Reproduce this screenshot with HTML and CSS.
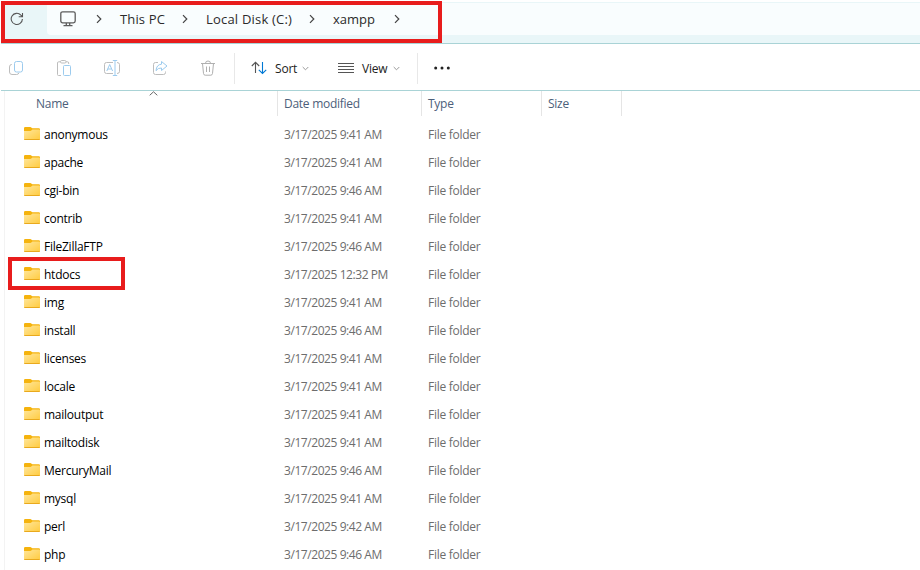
FILE: index.html
```html
<!DOCTYPE html>
<html lang="en">
<head>
  <meta charset="UTF-8" />
  <meta name="viewport" content="width=device-width, initial-scale=1.0" />
  <title>xampp</title>
  <link rel="stylesheet" href="styles.css">
</head>
<body>
  <svg class="defs" width="0" height="0">
    <defs>
      <linearGradient id="folder-fill" x1="0" y1="0" x2="1" y2="1">
        <stop offset="0" stop-color="#ffe69b" />
        <stop offset="1" stop-color="#ffcb3f" />
      </linearGradient>
      <symbol id="folder" viewBox="0 0 16 14">
        <path d="M0 1.2Q0 0 1.2 0H6.2Q7 0 7.6 .7L8.4 1.3H14.8Q16 1.3 16 2.5V7H0z" fill="#f5b30d" />
        <path d="M0 4H6.3Q7 4 7.6 3.3L8.4 2.6H15Q16 2.6 16 3.6V12Q16 13 15 13H1Q0 13 0 12z" fill="url(#folder-fill)" />
        <path d="M.3 12.5H15.7" stroke="#e9a91d" />
      </symbol>
      <symbol id="chevron" viewBox="0 0 6 10">
        <path d="M1 1.2L4.8 5L1 8.8" fill="none" stroke="#444" stroke-width="1.2" />
      </symbol>
      <symbol id="caret" viewBox="0 0 7 5">
        <path d="M.7 1L3.5 3.8L6.3 1" fill="none" stroke="#999" />
      </symbol>
    </defs>
  </svg>

  <div class="address-bar">
    <button class="refresh" aria-label="Refresh">
      <svg width="14" height="14" viewBox="0 0 14 14" fill="none" stroke="#555" stroke-width="1.1">
        <path d="M12.4 7A5.6 5.6 0 1 1 10.9 3.1L12.5 4.7M12.5 1V4.8H8.7" />
      </svg>
    </button>
    <div class="path">
      <svg class="monitor" width="16" height="16" viewBox="0 0 16 16" fill="none" stroke="#5c5c5c" stroke-width="1.3">
        <rect x=".8" y=".8" width="14.4" height="11" rx="1.8" />
        <path d="M6.3 12v2.5M9.7 12v2.5M3.5 14.6h9" />
      </svg>
      <svg class="chevron" width="6" height="10"><use href="#chevron" /></svg>
      <span class="crumb crumb-pc">This PC</span>
      <svg class="chevron" width="6" height="10"><use href="#chevron" /></svg>
      <span class="crumb crumb-disk">Local Disk (C:)</span>
      <svg class="chevron" width="6" height="10"><use href="#chevron" /></svg>
      <span class="crumb crumb-dir">xampp</span>
      <svg class="chevron" width="6" height="10"><use href="#chevron" /></svg>
    </div>
    <div class="mark mark-path"></div>
  </div>

  <div class="toolbar">
    <div class="actions">
      <svg width="16" height="16" viewBox="0 0 16 16" fill="none" stroke="#bdbdbd">
        <path d="M4 4.500H3.500Q1.500 4.500 1.500 7V12Q1.500 14.500 4 14.500H8.500Q10.500 14.500 11 12.800" />
        <rect x="6.500" y="1.500" width="8" height="10.500" rx="2" stroke="#9ccbee" />
      </svg>
      <svg width="16" height="16" viewBox="0 0 16 16" fill="none" stroke="#bdbdbd">
        <path d="M5 15.500H2.500Q1.500 15.500 1.500 14.500V3Q1.500 1.800 2.700 1.800H4.500M10 1.800H11.500Q12.700 1.800 12.700 3V4" />
        <rect x="4.500" y=".5" width="5.500" height="2.500" rx="1.200" />
        <rect x="7.500" y="5.500" width="7" height="10" rx="1" stroke="#9ccbee" />
      </svg>
      <svg width="16" height="16" viewBox="0 0 16 16" fill="none" stroke="#bdbdbd">
        <path d="M9 2.500H2.500Q.5 2.500 .5 4.500V11.500Q.5 13.500 2.500 13.500H9M13 2.500Q15.500 2.500 15.500 4.500V11.500Q15.500 13.500 13 13.500" />
        <path d="M2.800 11L5.700 4.500L8.600 11M3.800 9H7.600M8.800 .5H13.200M11 .5V15.500M8.800 15.500H13.200" stroke="#9ccbee" />
      </svg>
      <svg width="16" height="16" viewBox="0 0 16 16" fill="none" stroke="#bdbdbd">
        <path d="M6 2.500H3.500Q1.500 2.500 1.500 4.500V12.500Q1.500 14.500 3.500 14.500H11.500Q13.500 14.500 13.500 12.500V11.500" />
        <path d="M9.500 1.500L15 6L9.500 10.500V8Q6 7.700 4 10.700Q4.500 4.500 9.500 4.200z" stroke="#9ccbee" stroke-linejoin="round" />
      </svg>
      <svg width="16" height="16" viewBox="0 0 16 16" fill="none" stroke="#b0b0b0">
        <path d="M1 3.500H15M5.500 3.300Q5.500 1 8 1T10.500 3.300M2.500 3.500L3.500 13.500Q3.700 15.200 5.200 15.200H10.800Q12.300 15.200 12.500 13.500L13.500 3.500M6.500 6.500V12M9.500 6.500V12" />
      </svg>
    </div>
    <div class="menu menu-sort">
      <svg width="16" height="14" viewBox="0 0 16 14" fill="none" stroke-width="1.1">
        <path d="M4.500 12V1.500M.8 5L4.500 1.300L8.200 5" stroke="#555" />
        <path d="M11.500 1V12.300M7.800 8.800L11.500 12.500L15.200 8.800" stroke="#0078d4" />
      </svg>
      <span class="label">Sort</span>
      <svg class="caret" width="7" height="5"><use href="#caret" /></svg>
    </div>
    <div class="menu menu-view">
      <svg width="16" height="12" viewBox="0 0 16 12" stroke="#555">
        <path d="M0 1.500H16M0 4.500H16M0 7.500H16M0 10.500H16" />
      </svg>
      <span class="label">View</span>
      <svg class="caret" width="7" height="5"><use href="#caret" /></svg>
    </div>
    <div class="menu menu-more">
      <svg width="16" height="4" viewBox="0 0 16 4" fill="#222">
        <circle cx="1.700" cy="2" r="1.500" /><circle cx="8" cy="2" r="1.500" /><circle cx="14.300" cy="2" r="1.500" />
      </svg>
    </div>
  </div>

  <div class="files">
    <div class="row head">
      <span class="name">Name
        <svg class="sorted" width="9" height="5" viewBox="0 0 9 5" fill="none" stroke="#666"><path d="M.7 4.300L4.500 .8L8.300 4.300" /></svg>
      </span>
      <span>Date modified</span><span>Type</span><span>Size</span>
    </div>
    <div class="row"><span class="name"><svg width="16" height="14"><use href="#folder" /></svg>anonymous</span><span class="date">3/17/2025 9:41 AM</span><span>File folder</span></div>
    <div class="row"><span class="name"><svg width="16" height="14"><use href="#folder" /></svg>apache</span><span class="date">3/17/2025 9:41 AM</span><span>File folder</span></div>
    <div class="row"><span class="name"><svg width="16" height="14"><use href="#folder" /></svg>cgi-bin</span><span class="date">3/17/2025 9:46 AM</span><span>File folder</span></div>
    <div class="row"><span class="name"><svg width="16" height="14"><use href="#folder" /></svg>contrib</span><span class="date">3/17/2025 9:41 AM</span><span>File folder</span></div>
    <div class="row"><span class="name"><svg width="16" height="14"><use href="#folder" /></svg>FileZillaFTP</span><span class="date">3/17/2025 9:46 AM</span><span>File folder</span></div>
    <div class="row"><span class="name"><svg width="16" height="14"><use href="#folder" /></svg>htdocs</span><span class="date">3/17/2025 12:32 PM</span><span>File folder</span><div class="mark mark-row"></div></div>
    <div class="row"><span class="name"><svg width="16" height="14"><use href="#folder" /></svg>img</span><span class="date">3/17/2025 9:41 AM</span><span>File folder</span></div>
    <div class="row"><span class="name"><svg width="16" height="14"><use href="#folder" /></svg>install</span><span class="date">3/17/2025 9:46 AM</span><span>File folder</span></div>
    <div class="row"><span class="name"><svg width="16" height="14"><use href="#folder" /></svg>licenses</span><span class="date">3/17/2025 9:41 AM</span><span>File folder</span></div>
    <div class="row"><span class="name"><svg width="16" height="14"><use href="#folder" /></svg>locale</span><span class="date">3/17/2025 9:41 AM</span><span>File folder</span></div>
    <div class="row"><span class="name"><svg width="16" height="14"><use href="#folder" /></svg>mailoutput</span><span class="date">3/17/2025 9:41 AM</span><span>File folder</span></div>
    <div class="row"><span class="name"><svg width="16" height="14"><use href="#folder" /></svg>mailtodisk</span><span class="date">3/17/2025 9:41 AM</span><span>File folder</span></div>
    <div class="row"><span class="name"><svg width="16" height="14"><use href="#folder" /></svg>MercuryMail</span><span class="date">3/17/2025 9:46 AM</span><span>File folder</span></div>
    <div class="row"><span class="name"><svg width="16" height="14"><use href="#folder" /></svg>mysql</span><span class="date">3/17/2025 9:41 AM</span><span>File folder</span></div>
    <div class="row"><span class="name"><svg width="16" height="14"><use href="#folder" /></svg>perl</span><span class="date">3/17/2025 9:42 AM</span><span>File folder</span></div>
    <div class="row"><span class="name"><svg width="16" height="14"><use href="#folder" /></svg>php</span><span class="date">3/17/2025 9:46 AM</span><span>File folder</span></div>
  </div>
</body>
</html>
```
FILE: styles.css
```css
* {
  box-sizing: border-box;
}
body {
  margin: 0;
  height: 570px;
  overflow: hidden;
  background: #fff;
  font-family: "Segoe UI", "Open Sans", "Noto Sans", sans-serif;
  font-size: 12px;
  color: #6d6d6d;
}
svg {
  display: block;
  flex: none;
}
.defs {
  position: absolute;
}
.address-bar {
  position: relative;
  display: flex;
  height: 44px;
  margin-left: 1px;
  padding-top: 3px;
  background: linear-gradient(#fff 2px, #e9f6f8 2px);
  border-bottom: 1px solid #a9d3d6;
}
.refresh {
  width: 46px;
  height: 32px;
  padding: 0 0 0 9px;
  border: 0;
  background: none;
}
.path {
  flex: 1;
  display: flex;
  align-items: center;
  height: 32px;
  padding-left: 13px;
  background: #f9fdfe;
  border-radius: 0 0 0 4px;
  font-size: 13px;
  color: #2b2b2b;
}
.monitor {
  margin-right: 20px;
}
.crumb {
  margin-left: 18px;
  white-space: nowrap;
}
.crumb-pc {
  width: 62px;
  letter-spacing: .15px;
}
.crumb-disk {
  width: 103px;
  letter-spacing: .2px;
}
.crumb-dir {
  width: 61px;
}
.mark {
  position: absolute;
  border: 4px solid #e81c1c;
}
.mark-path {
  left: 0;
  top: 1px;
  width: 441px;
  height: 42px;
}
.mark-row {
  left: 8px;
  top: -4px;
  width: 117px;
  height: 33px;
}
.toolbar {
  display: flex;
  align-items: center;
  height: 47px;
  margin-left: 1px;
  padding-top: 2px;
  border-bottom: 1px solid #a9d3d6;
}
.actions {
  display: flex;
  gap: 32px;
  padding-left: 7px;
  width: 233px;
}
.menu {
  display: flex;
  align-items: center;
  height: 31px;
  color: #222;
}
.menu .label {
  width: 27px;
  margin-left: 8px;
  letter-spacing: -.2px;
}
.menu-sort {
  width: 87px;
  padding-left: 16px;
  border-left: 1px solid #e8e8e8;
}
.menu-view {
  width: 96px;
  padding-left: 17px;
}
.menu-view .label {
  width: 31px;
}
.menu-more {
  padding-left: 16px;
  border-left: 1px solid #e8e8e8;
}
.files {
  height: 479px;
  background: linear-gradient(90deg, transparent 4px, #f3f3f3 4px, #f3f3f3 5px, transparent 5px);
}
.row {
  position: relative;
  display: grid;
  grid-template-columns: 278px 144px 120px 80px;
  height: 28px;
  line-height: 28px;
  letter-spacing: -.27px;
}
.row > span {
  padding-left: 6px;
  white-space: nowrap;
}
.row > .name {
  display: flex;
  padding-left: 24px;
  color: #000;
  letter-spacing: -.25px;
}
.row > .date {
  letter-spacing: -.43px;
}
.name svg {
  margin: 6px 4px 0 0;
}
.row.head {
  height: 25px;
  margin-bottom: 5px;
  line-height: 25px;
}
.head > span {
  color: #4c607a;
  border-right: 1px solid #e5e5e5;
}
.head > .name {
  padding-left: 36px;
  color: #4c607a;
}
.name .sorted {
  position: absolute;
  left: 149px;
  top: 0;
  margin: 0;
}
```
